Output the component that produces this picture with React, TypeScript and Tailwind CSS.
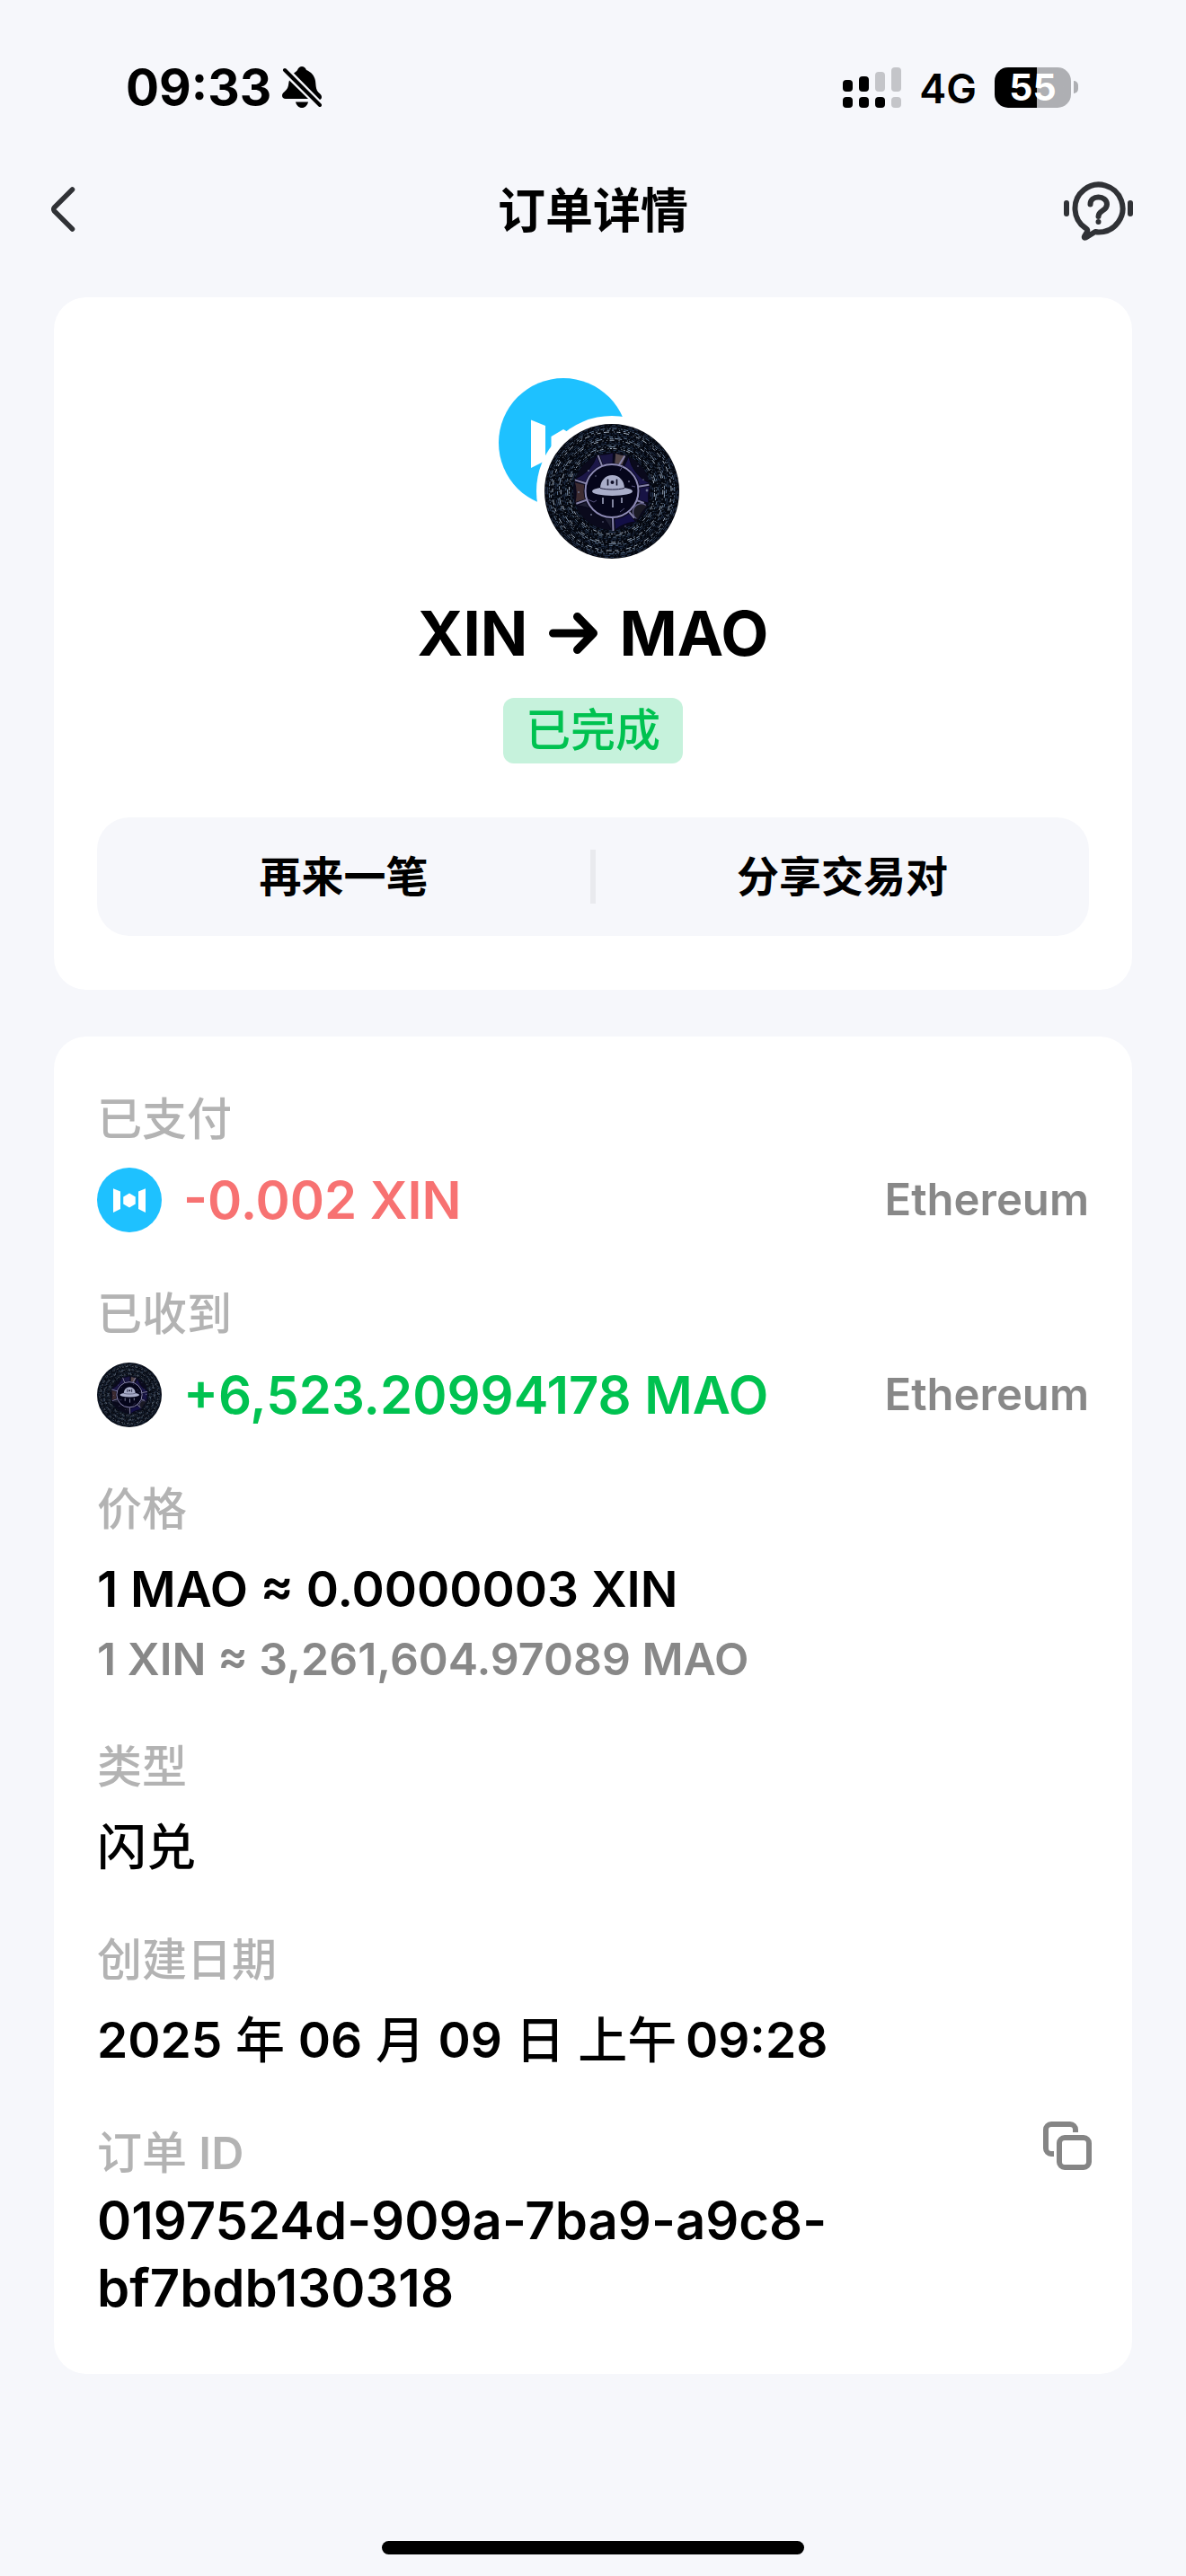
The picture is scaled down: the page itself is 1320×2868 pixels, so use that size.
import type { ReactNode } from "react";

function XinLogo({ className }: { className: string }) {
  return (
    <svg viewBox="0 0 144 144" className={className} aria-hidden="true">
      <circle cx="72" cy="72" r="72" fill="#1ec1ff" />
      <path d="M36 46.5 52 53v39l-16 8zM108 46.5 92 53v39l16 8zM72 57l13.5 8v16L72 89l-13.5-8V65z" fill="#fff" />
    </svg>
  );
}

const rings = Array.from({ length: 18 }, (_, i) => ({
  r: 42 + i * 1.85,
  dash: `${1 + ((i * 7) % 4)} ${1.5 + ((i * 5) % 3)} ${2 + ((i * 3) % 7)} ${2 + ((i * 11) % 5)} 1 ${1.5 + (i % 3)}`,
  color: ["#6a87a8", "#34496a", "#93abc8", "#2a3d5a", "#bccbdc"][(i * 3) % 5],
  turn: (i * 53) % 360,
}));

const stones = [
  { from: -85, to: -68, color: "#54474a" },
  { from: -64, to: -12, color: "#1b164c" },
  { from: -8, to: 18, color: "#171344" },
  { from: 22, to: 48, color: "#1a1a24" },
  { from: 52, to: 85, color: "#130f46" },
  { from: 91, to: 158, color: "#1d1e31" },
  { from: 163, to: 194, color: "#3e2c31" },
  { from: 199, to: 247, color: "#1c1748" },
  { from: 251, to: 272, color: "#1a1642" },
];

function at(radius: number, degrees: number) {
  const a = (degrees * Math.PI) / 180;
  return `${(75 + radius * Math.cos(a)).toFixed(1)} ${(75 + radius * Math.sin(a)).toFixed(1)}`;
}

function MaoLogo({ className }: { className: string }) {
  return (
    <svg viewBox="0 0 150 150" className={className} aria-hidden="true">
      <circle cx="75" cy="75" r="75" fill="#04070f" />
      {rings.map((ring) => (
        <circle
          key={ring.r}
          cx="75"
          cy="75"
          r={ring.r}
          fill="none"
          stroke={ring.color}
          strokeWidth="0.8"
          strokeDasharray={ring.dash}
          transform={`rotate(${ring.turn} 75 75)`}
        />
      ))}
      <circle cx="75" cy="75" r="43" fill="#0a0a1c" />
      {stones.map((s) => (
        <path
          key={s.from}
          d={`M${at(31, s.from)}A31 31 0 0 1 ${at(31, s.to)}L${at(43, s.to)}A43 43 0 0 1 ${at(43, s.from)}z`}
          fill={s.color}
          stroke="#07071a"
          strokeWidth="1"
        />
      ))}
      <path
        d={`M${at(30, -10)}L${at(42, -10)}M${at(30, 20)}L${at(38, 20)}M${at(30, 50)}L${at(39, 50)}M${at(30, 88)}L${at(44, 88)}M${at(30, 161)}L${at(42, 161)}M${at(30, 197)}L${at(43, 197)}M${at(30, 249)}L${at(43, 249)}M${at(30, 285)}L${at(42, 290)}`}
        stroke="#8582a8"
        strokeWidth="2"
      />
      <path d={`M${at(41, 22)}A9 9 0 1 0 ${at(41, 48)}`} fill="none" stroke="#66638c" strokeWidth="1.2" />
      <circle cx="75" cy="74.500" r="29.500" fill="#05051a" stroke="#8f8cb6" strokeWidth="2" />
      <path d="M48 84l7 3 3-2M84 52l3-5M101 70l-4-1M84 98l5-4" stroke="#55527c" strokeWidth="1" fill="none" />
      <g fill="#6d708d">
        <circle cx="94" cy="64" r="1" />
        <circle cx="57" cy="58" r="0.8" />
        <circle cx="104" cy="47" r="0.8" />
        <circle cx="114" cy="74" r="1.400" />
        <circle cx="110" cy="62" r="0.8" />
        <circle cx="38" cy="76" r="1" />
        <circle cx="52" cy="101" r="1" />
        <circle cx="90" cy="114" r="0.8" />
        <circle cx="49" cy="52" r="1" />
        <circle cx="65" cy="109" r="0.8" />
      </g>
      <path d="M62 72c0-9 6-15 13.500-15S89 63 89 72z" fill="#a9adc9" />
      <ellipse cx="75.500" cy="75" rx="22.500" ry="5" fill="#a9adc9" />
      <path d="M62 71.500c8 2 19 2 27 0" stroke="#1b1b38" strokeWidth="1" fill="none" />
      <path d="M70.500 61.500v7M80.500 61.500v7" stroke="#0b0b24" strokeWidth="1.600" />
      <circle cx="75.500" cy="65" r="2" fill="#0b0b24" />
      <path d="M65 82v7M76 84v9M86 82v6" stroke="#a9adc9" strokeWidth="1.500" />
    </svg>
  );
}

function StatusBar() {
  return (
    <div className="flex h-[150px] items-center justify-between pt-11 pr-[120px] pl-[140px]">
      <div className="flex items-center gap-3">
        <span className="text-[55px] leading-[60px] font-bold">09:33</span>
        <svg viewBox="0 0 44 46" className="h-[46px] w-[44px]" aria-label="静音">
          <path d="M13 7.500C15 6 16 5.500 17 4c1-2.500 3-4 5-4s4 1.500 5 4c5 2 9 6 10 12 .6 4 .4 8 2 11 2 3 5 4 5 7 0 1.500-.8 2.500-2 3z" />
          <path d="M8 15.500 29 36H4c-2.500 0-4-1.500-4-3.500C0 29 4 28 6 24c1.500-3 1-6 2-8.500z" />
          <path d="M15 39.500h14c-1 4-3.500 6.500-7 6.500s-6-2.500-7-6.500z" />
          <path d="M3 4 42 43" stroke="#000" strokeWidth="4" strokeLinecap="round" />
        </svg>
      </div>
      <div className="flex items-center gap-5">
        <svg viewBox="0 0 65 45" className="h-[45px] w-[65px]" aria-label="信号">
          <rect x="0" y="14" width="11" height="13" rx="4" />
          <rect x="18" y="10" width="11" height="17" rx="4" />
          <rect x="36" y="5" width="11" height="22" rx="4" fill="#c4c5c9" />
          <rect x="54" y="0" width="11" height="27" rx="4" fill="#c4c5c9" />
          <rect x="0" y="33" width="11" height="12" rx="4" />
          <rect x="18" y="33" width="11" height="12" rx="4" />
          <rect x="36" y="33" width="11" height="12" rx="4" />
          <rect x="54" y="33" width="11" height="12" rx="4" fill="#c4c5c9" />
        </svg>
        <span className="pt-1 text-[45px] leading-[48px] font-semibold">4G</span>
        <div className="flex items-center gap-[3px]">
          <div className="flex h-[45px] w-[85px] items-center justify-center rounded-[15px] bg-linear-to-r from-black from-55% to-[#aeafb3] to-55% text-[41px] leading-[45px] font-bold text-white">
            55
          </div>
          <div className="h-[14px] w-[5px] rounded-r-full bg-[#aeafb3]" />
        </div>
      </div>
    </div>
  );
}

function Header() {
  return (
    <header className="mb-3 flex h-[169px] items-center justify-between px-14">
      <button type="button" aria-label="返回" className="flex size-20 items-center pb-1">
        <svg viewBox="0 0 40 60" className="h-[60px] w-[40px]" fill="none" stroke="#303236" strokeWidth="5.500" strokeLinecap="round" strokeLinejoin="round">
          <path d="M24.500 8 4.500 28q-1.500 2 0 4L24.500 52" />
        </svg>
      </button>
      <h1 className="text-[53px] leading-[64px] font-bold">订单详情</h1>
      <button type="button" aria-label="客服" className="flex size-20 items-center justify-end">
        <svg viewBox="0 0 80 66" className="h-[66px] w-[80px]" fill="none" stroke="#303236" strokeWidth="6" strokeLinecap="round" strokeLinejoin="round">
          <path d="M3 24v12M74 24v12" />
          <path d="M35 56q2 .5 4 .5a26.500 26.500 0 1 0-14-4c1.500 1 1.500 2 1 3.500l-3 5c-.6 1.500 0 2 1.500 1.500z" />
          <path d="M29.500 25.500c0-5 4-8 9-8s9.500 3 9.500 8c0 8-9.500 6-9.500 13.500" />
          <circle cx="38.500" cy="45" r="3" fill="#303236" stroke="none" />
        </svg>
      </button>
    </header>
  );
}

function Row({ label, children }: { label: string; children: ReactNode }) {
  return (
    <div>
      <dt className="mb-[23px] text-[50px] leading-[60px] text-[#b3b3b3]">{label}</dt>
      {children}
    </div>
  );
}

function Amount({ logo, value, color }: { logo: ReactNode; value: string; color: string }) {
  return (
    <dd className="flex items-center justify-between font-semibold">
      <span className="flex items-center gap-6">
        {logo}
        <span className={`text-[58px] leading-[74px] ${color}`}>{value}</span>
      </span>
      <span className="text-[49px] leading-[60px] text-[#888888]">Ethereum</span>
    </dd>
  );
}

export default function App() {
  return (
    <div className="flex min-h-screen flex-col bg-[#f6f7fb] font-['Inter','Noto_Sans_CJK_SC',sans-serif] text-black">
      <StatusBar />
      <Header />
      <main className="flex flex-col gap-[52px] px-[60px]">
        <section className="flex flex-col items-center rounded-[36px] bg-white px-12 pt-[90px] pb-[60px]">
          <div className="relative size-[210px]">
            <XinLogo className="size-36" />
            <div className="absolute right-0 bottom-0 rounded-full bg-white p-[9px]">
              <MaoLogo className="size-[150px]" />
            </div>
          </div>
          <h2 className="mt-8 flex items-center gap-6 text-[69px] leading-[84px] font-bold">
            XIN
            <svg viewBox="0 0 54 46" className="h-[46px] w-[54px]" fill="none" stroke="#000" strokeWidth="9" strokeLinecap="round" strokeLinejoin="round" aria-label="兑换为">
              <path d="M4.500 23H48M31.500 4.500 49.500 23l-18 18.500" />
            </svg>
            MAO
          </h2>
          <span className="mt-[30px] rounded-xl bg-[#c6f2dc] px-[25px] text-[50px] leading-[73px] font-medium text-[#00c250]">已完成</span>
          <div className="mt-[60px] flex h-[132px] w-full items-center rounded-[36px] bg-[#f6f7fb] text-[47px] font-bold">
            <button type="button" className="h-full flex-1">再来一笔</button>
            <div className="h-[60px] w-[6px] bg-[#e9eaee]" />
            <button type="button" className="h-full flex-1">分享交易对</button>
          </div>
        </section>

        <section className="rounded-[36px] bg-white px-12 pt-[62px] pb-[58px] font-medium">
          <dl className="flex flex-col gap-[60px]">
            <Row label="已支付">
              <Amount logo={<XinLogo className="size-[72px]" />} value="-0.002 XIN" color="text-[#f77272]" />
            </Row>
            <Row label="已收到">
              <Amount logo={<MaoLogo className="size-[72px]" />} value="+6,523.20994178 MAO" color="text-[#00c250]" />
            </Row>
            <Row label="价格">
              <dd className="text-[55px] leading-[72px] font-semibold">1 MAO ≈ 0.0000003 XIN</dd>
              <dd className="mt-3 text-[50px] leading-[60px] font-semibold text-[#888888]">1 XIN ≈ 3,261,604.97089 MAO</dd>
            </Row>
            <Row label="类型">
              <dd className="text-[55px] leading-[72px]">闪兑</dd>
            </Row>
            <Row label="创建日期">
              <dd className="text-[55px] leading-[72px]">
                <b className="font-semibold">2025</b> 年 <b className="font-semibold">06</b> 月 <b className="font-semibold">09</b> 日 上午{"\u2009"}
                <b className="font-semibold">09:28</b>
              </dd>
            </Row>
            <div>
              <dt className="mb-2 flex h-[60px] items-center justify-between text-[50px] leading-[60px] text-[#b3b3b3]">
                <span>
                  订单 <b className="font-semibold">ID</b>
                </span>
                <button type="button" aria-label="复制订单 ID" className="-mr-2 -mt-4 flex size-16 items-center justify-center">
                  <svg viewBox="0 0 54 54" className="size-[54px]" fill="none" stroke="#858585" strokeWidth="6">
                    <rect x="18" y="18" width="33" height="33" rx="6" />
                    <path d="M36 12V9a6 6 0 0 0-6-6H9a6 6 0 0 0-6 6v21a6 6 0 0 0 6 6h3" />
                  </svg>
                </button>
              </dt>
              <dd className="max-w-[900px] text-[58px] leading-[75px] font-semibold">0197524d-909a-7ba9-a9c8-bf7bdb130318</dd>
            </div>
          </dl>
        </section>
      </main>
      <div className="mt-auto flex justify-center pb-6">
        <div className="h-[15px] w-[470px] rounded-full bg-black" />
      </div>
    </div>
  );
}
